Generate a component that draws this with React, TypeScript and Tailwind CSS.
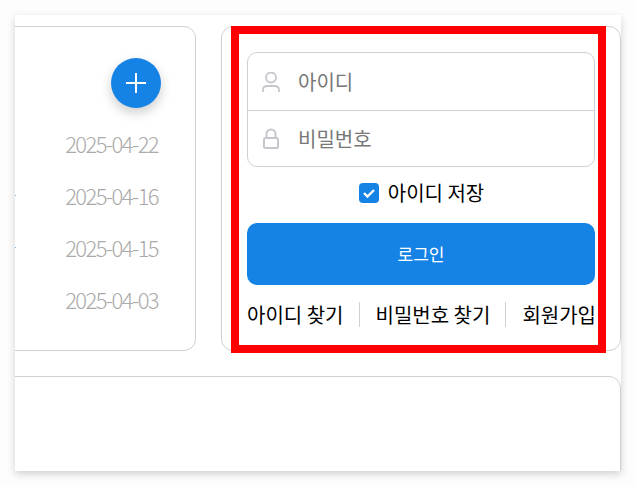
const fontStack = { fontFamily: '"Noto Sans CJK KR", "Noto Sans", sans-serif' };

const dates = [
  { date: "2025-04-22", tick: false },
  { date: "2025-04-16", tick: true },
  { date: "2025-04-15", tick: true },
  { date: "2025-04-03", tick: false },
];

const UserIcon = () => (
  <svg width="18" height="20" viewBox="0 0 18 20" fill="none" stroke="#c6c7cd" strokeWidth="1.8">
    <circle cx="9" cy="5.5" r="5" />
    <path d="M1 20v-2c0-2.6 2-4 4.5-4h7c2.5 0 4.5 1.4 4.5 4v2" />
  </svg>
);

const LockIcon = () => (
  <svg width="18" height="22" viewBox="0 0 18 22" fill="none" stroke="#c6c7cd" strokeWidth="2">
    <path d="M4.5 10V6a4.5 4.5 0 0 1 9 0v4" />
    <rect x="2" y="10" width="14" height="10" rx="1.5" />
  </svg>
);

const App = () => {
  return (
    <div className="h-[486px] w-[636px] overflow-hidden bg-[#fdfdfd] pt-[15px] pl-[15px]" style={fontStack}>
      <div className="h-[456px] w-[606px] overflow-hidden bg-white shadow-[0_3px_8px_rgba(0,0,0,0.18)]">
        <div className="flex pt-[11px]">
          {/* left list card, cut off by the panel */}
          <div className="-ml-5 h-[325px] w-[201px] shrink-0 rounded-xl border border-[#cfd0d6] bg-white pt-[31px] pr-[34px]">
            <div className="flex justify-end">
              <button className="flex h-[50px] w-[50px] items-center justify-center rounded-full bg-[#1583e6] shadow-[0_5px_12px_rgba(0,0,0,0.2)]">
                <svg width="20" height="20" viewBox="0 0 20 20" stroke="#fff" strokeWidth="2">
                  <path d="M10 0v20M0 10h20" />
                </svg>
              </button>
            </div>
            <ul className="mt-[9px] flex flex-col">
              {dates.map((d) => (
                <li
                  key={d.date}
                  className="flex h-[52px] items-center justify-end pr-[3px] text-[22px] font-light tracking-[-1.6px] text-[#aaaaaa]"
                >
                  {d.tick && <span className="mr-auto ml-[19px] h-px w-px bg-[#7db8ea]" />}
                  {d.date}
                </li>
              ))}
            </ul>
          </div>

          {/* login card */}
          <div className="relative ml-[25px] h-[325px] w-[400px] shrink-0 rounded-xl border border-[#cfd0d6] bg-white pl-[9px]">
            <div className="-mt-px h-[327px] w-[375px] border-8 border-[#ff0000] pt-[18px] pl-2">
              <div className="w-[348px] rounded-[10px] border border-[#cfd0d6]">
                <div className="flex h-[58px] items-center gap-[18px] border-b border-[#cfd0d6] pl-[14px]">
                  <UserIcon />
                  <span className="text-[20px] text-[#777777]">아이디</span>
                </div>
                <div className="flex h-[55px] items-center gap-[18px] pl-[14px]">
                  <LockIcon />
                  <span className="text-[20px] text-[#777777]">비밀번호</span>
                </div>
              </div>

              <div className="mt-[11px] flex h-[30px] w-[349px] items-center justify-center gap-[9px]">
                <span className="flex h-5 w-5 items-center justify-center rounded bg-[#1583e6]">
                  <svg width="14" height="12" viewBox="0 0 14 12" fill="none" stroke="#fff" strokeWidth="2.4">
                    <path d="M2 6l3.5 3.5L12 3" />
                  </svg>
                </span>
                <span className="text-[20px] text-black">아이디 저장</span>
              </div>

              <button className="mt-[15px] flex h-[62px] w-[348px] items-center justify-center rounded-[10px] bg-[#1583e6] text-[17px] text-white">
                로그인
              </button>

              <div className="mt-[17px] flex h-[25px] w-[349px] items-center justify-between text-[20px] text-black">
                <span>아이디 찾기</span>
                <span className="h-[25px] w-px bg-[#cfd0d6]" />
                <span>비밀번호 찾기</span>
                <span className="mr-px -ml-px h-[25px] w-px bg-[#cfd0d6]" />
                <span>회원가입</span>
              </div>
            </div>
          </div>
        </div>

        {/* empty lower card */}
        <div className="mt-[25px] -ml-5 h-[140px] w-[626px] rounded-xl border border-[#cfd0d6] bg-white" />
      </div>
    </div>
  );
};

export default App;
